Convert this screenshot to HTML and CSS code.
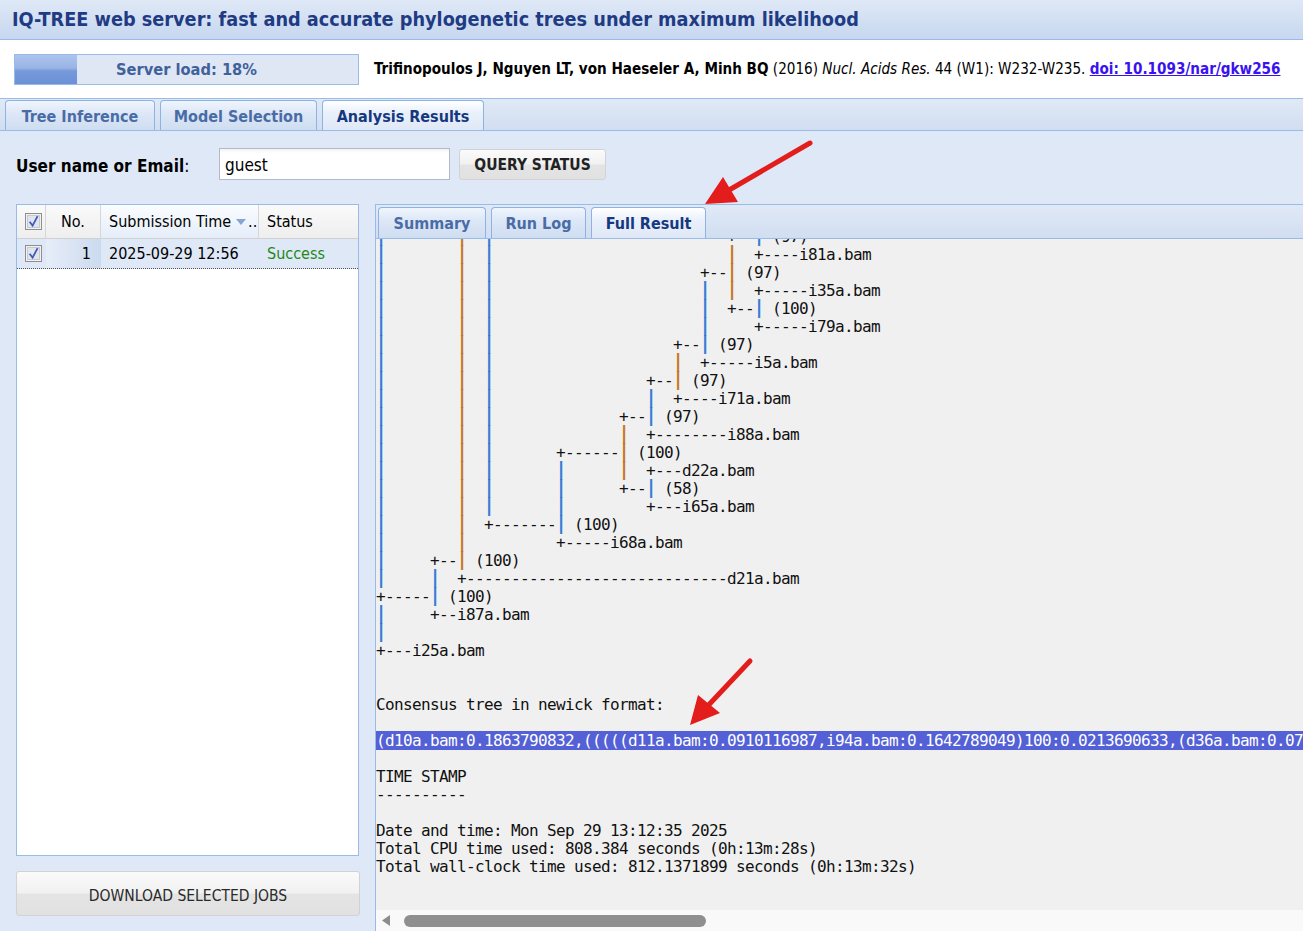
FILE: index.html
```html
<!DOCTYPE html>
<html lang="en">
<head>
<meta charset="utf-8">
<title>IQ-TREE web server</title>
<link rel="stylesheet" href="styles.css">
</head>
<body>
<div class="app">
  <header class="title-bar">
    <h1>IQ-TREE web server: fast and accurate phylogenetic trees under maximum likelihood</h1>
  </header>

  <div class="info-row">
    <div class="load-bar">
      <div class="load-fill" style="width:18%"></div>
      <span class="load-text">Server load: 18%</span>
    </div>
    <p class="cite"><b>Trifinopoulos J, Nguyen LT, von Haeseler A, Minh BQ</b> (2016) <i>Nucl. Acids Res.</i> 44 (W1): W232-W235. <a href="#">doi: 10.1093/nar/gkw256</a></p>
  </div>

  <nav class="main-tabs">
    <span class="tab tab-tree">Tree Inference</span>
    <span class="tab tab-model">Model Selection</span>
    <span class="tab tab-results active">Analysis Results</span>
  </nav>

  <main class="panel-body">
    <div class="query-row">
      <label class="query-label"><b>User name or Email</b>:</label>
      <div class="query-input">guest</div>
      <button class="btn btn-query">QUERY STATUS</button>
    </div>

    <div class="columns">
      <aside class="left-col">
        <div class="grid">
          <div class="grid-head">
            <div class="cell c-check"><svg class="cb" viewBox="0 0 17 17" width="17" height="17"><rect x="0.5" y="0.5" width="16" height="16" fill="#f2f2f2" stroke="#8e8e8e"/><rect x="2.5" y="2.5" width="12" height="12" fill="#e1e4ea" stroke="#c5c9d1"/><path d="M4.6 8.8 L7.6 12.6 L12.6 3.2" fill="none" stroke="#3d5bbd" stroke-width="1.8"/></svg></div>
            <div class="cell c-no">No.</div>
            <div class="cell c-time sorted">Submission Time<svg class="sort" viewBox="0 0 10 6" width="10" height="6"><path d="M0 0 H10 L5 6 Z" fill="#88a3d6"/></svg>..</div>
            <div class="cell c-status">Status</div>
          </div>
          <div class="grid-row">
            <div class="cell c-check"><svg class="cb" viewBox="0 0 17 17" width="17" height="17"><rect x="0.5" y="0.5" width="16" height="16" fill="#f2f2f2" stroke="#8e8e8e"/><rect x="2.5" y="2.5" width="12" height="12" fill="#e1e4ea" stroke="#c5c9d1"/><path d="M4.6 8.8 L7.6 12.6 L12.6 3.2" fill="none" stroke="#3d5bbd" stroke-width="1.8"/></svg></div>
            <div class="cell c-no num">1</div>
            <div class="cell c-time">2025-09-29 12:56</div>
            <div class="cell c-status ok">Success</div>
          </div>
        </div>
        <button class="btn btn-download">DOWNLOAD SELECTED JOBS</button>
      </aside>

      <section class="result">
        <div class="result-tabs">
          <span class="tab rtab-summary">Summary</span>
          <span class="tab rtab-log">Run Log</span>
          <span class="tab rtab-full active">Full Result</span>
        </div>
        <div class="result-content">
<pre class="tree"><span class="b">│</span>        <span class="o">│</span>  <span class="b">│</span>                          +--<span class="b">│</span> (97)
<span class="b">│</span>        <span class="o">│</span>  <span class="b">│</span>                          <span class="o">│</span>  +----i81a.bam
<span class="b">│</span>        <span class="o">│</span>  <span class="b">│</span>                       +--<span class="o">│</span> (97)
<span class="b">│</span>        <span class="o">│</span>  <span class="b">│</span>                       <span class="b">│</span>  <span class="o">│</span>  +-----i35a.bam
<span class="b">│</span>        <span class="o">│</span>  <span class="b">│</span>                       <span class="b">│</span>  +--<span class="b">│</span> (100)
<span class="b">│</span>        <span class="o">│</span>  <span class="b">│</span>                       <span class="b">│</span>     +-----i79a.bam
<span class="b">│</span>        <span class="o">│</span>  <span class="b">│</span>                    +--<span class="b">│</span> (97)
<span class="b">│</span>        <span class="o">│</span>  <span class="b">│</span>                    <span class="o">│</span>  +-----i5a.bam
<span class="b">│</span>        <span class="o">│</span>  <span class="b">│</span>                 +--<span class="o">│</span> (97)
<span class="b">│</span>        <span class="o">│</span>  <span class="b">│</span>                 <span class="b">│</span>  +----i71a.bam
<span class="b">│</span>        <span class="o">│</span>  <span class="b">│</span>              +--<span class="b">│</span> (97)
<span class="b">│</span>        <span class="o">│</span>  <span class="b">│</span>              <span class="o">│</span>  +--------i88a.bam
<span class="b">│</span>        <span class="o">│</span>  <span class="b">│</span>       +------<span class="o">│</span> (100)
<span class="b">│</span>        <span class="o">│</span>  <span class="b">│</span>       <span class="b">│</span>      <span class="o">│</span>  +---d22a.bam
<span class="b">│</span>        <span class="o">│</span>  <span class="b">│</span>       <span class="b">│</span>      +--<span class="b">│</span> (58)
<span class="b">│</span>        <span class="o">│</span>  <span class="b">│</span>       <span class="b">│</span>         +---i65a.bam
<span class="b">│</span>        <span class="o">│</span>  +-------<span class="b">│</span> (100)
<span class="b">│</span>        <span class="o">│</span>          +-----i68a.bam
<span class="b">│</span>     +--<span class="o">│</span> (100)
<span class="b">│</span>     <span class="b">│</span>  +-----------------------------d21a.bam
+-----<span class="b">│</span> (100)
<span class="b">│</span>     +--i87a.bam
<span class="b">│</span>
+---i25a.bam


Consensus tree in newick format:

<span class="sel">(d10a.bam:0.1863790832,(((((d11a.bam:0.0910116987,i94a.bam:0.1642789049)100:0.0213690633,(d36a.bam:0.0712468915,i42a.bam:0.0839120476)100:0.0125780391)</span>

TIME STAMP
----------

Date and time: Mon Sep 29 13:12:35 2025
Total CPU time used: 808.384 seconds (0h:13m:28s)
Total wall-clock time used: 812.1371899 seconds (0h:13m:32s)
</pre>
        </div>
        <div class="hscroll">
          <svg class="hs-arrow" viewBox="0 0 8 11" width="8" height="11"><path d="M8 0 V11 L0 5.5 Z" fill="#8c8c8c"/></svg>
          <div class="hs-thumb"></div>
        </div>
      </section>
    </div>
  </main>

  <svg class="arrows" viewBox="0 0 1303 931" width="1303" height="931">
    <line x1="810" y1="143" x2="724" y2="193" stroke="#e31c1c" stroke-width="5" stroke-linecap="round"/>
    <polygon points="705,204 723,177 738,202" fill="#e31c1c"/>
    <line x1="750" y1="661" x2="703" y2="711" stroke="#e31c1c" stroke-width="5" stroke-linecap="round"/>
    <polygon points="690,725 698,695 720,713" fill="#e31c1c"/>
  </svg>
</div>
</body>
</html>
```

FILE: styles.css
```css
* { box-sizing: border-box; }

html, body {
  margin: 0;
  padding: 0;
}

body {
  width: 1303px;
  height: 931px;
  overflow: hidden;
  font-family: "DejaVu Sans Condensed", "DejaVu Sans", sans-serif;
  background: #dfe8f6;
}

.app {
  position: relative;
  display: flex;
  flex-direction: column;
  height: 931px;
}

/* ---------- title ---------- */
.title-bar {
  flex: none;
  height: 40px;
  display: flex;
  align-items: center;
  padding-left: 12px;
  background: linear-gradient(#dfe8f6 0%, #d3e0f3 50%, #c6d7ef 100%);
  border-bottom: 1px solid #99bbe8;
}

.title-bar h1 {
  margin: 0;
  font-size: 19.7px;
  font-weight: bold;
  color: #1f3b83;
  white-space: nowrap;
}

/* ---------- info row ---------- */
.info-row {
  flex: none;
  height: 58px;
  display: flex;
  align-items: center;
  padding-left: 14px;
  gap: 15px;
  background: #fff;
}

.load-bar {
  width: 345px;
  height: 31px;
  border: 1px solid #99bbe8;
  background: #dfe7f5;
  display: grid;
}

.load-bar > * { grid-area: 1 / 1; }

.load-fill {
  background: linear-gradient(#adc4ec 0%, #98b4e6 45%, #7699da 55%, #6b91d6 100%);
}

.load-text {
  align-self: center;
  justify-self: center;
  font-weight: bold;
  font-size: 16.3px;
  color: #41619b;
}

.cite {
  margin: 0;
  font-size: 15.1px;
  color: #000;
  white-space: nowrap;
}

.cite a {
  color: #3a12f0;
  font-weight: bold;
  text-decoration: underline;
}

/* ---------- tabs ---------- */
.main-tabs {
  flex: none;
  height: 33px;
  display: flex;
  align-items: flex-end;
  gap: 5px;
  padding-left: 5px;
  background: linear-gradient(#e0e9f6, #d1def1);
  border-top: 1px solid #99bbe8;
  border-bottom: 1px solid #99bbe8;
}

.tab {
  height: 30px;
  display: flex;
  align-items: center;
  justify-content: center;
  padding-top: 2px;
  font-size: 16px;
  font-weight: bold;
  color: #4a6ca6;
  border: 1px solid #8db2e3;
  border-bottom: none;
  border-radius: 4px 4px 0 0;
  background: linear-gradient(#f0f5fc 0%, #dde8f7 40%, #cfddf1 100%);
}

.tab.active {
  color: #15387f;
  background: linear-gradient(#ffffff 0%, #eaf1fb 40%, #dfe8f6 100%);
}

.tab-tree { width: 150px; }
.tab-model { width: 157px; }
.tab-results { width: 162px; }

/* ---------- panel ---------- */
.panel-body {
  flex: 1;
  min-height: 0;
  display: flex;
  flex-direction: column;
  padding-left: 16px;
  background: #dfe8f6;
}

.query-row {
  flex: none;
  display: flex;
  align-items: center;
  height: 32px;
  margin-top: 17px;
}

.query-label {
  width: 203px;
  padding-top: 3px;
  font-size: 17px;
  color: #000;
}

.query-input {
  width: 231px;
  height: 32px;
  border: 1px solid #b5b8c8;
  background: linear-gradient(#f3f3f3 0px, #ffffff 4px);
  font-size: 17px;
  padding: 6px 5px 0;
  color: #000;
}

.btn {
  font-family: "DejaVu Sans Condensed", "DejaVu Sans", sans-serif;
  border: 1px solid #d2d2d2;
  border-radius: 3px;
  background: linear-gradient(#fbfbfb 0%, #f1f1f1 48%, #e4e4e4 52%, #e1e1e1 100%);
  color: #222;
  padding: 2px 0 0;
}

.btn-query {
  margin-left: 9px;
  width: 147px;
  height: 31px;
  font-size: 15.5px;
  font-weight: bold;
}

.columns {
  flex: 1;
  min-height: 0;
  display: flex;
  margin-top: 24px;
  gap: 16px;
}

/* ---------- left grid ---------- */
.left-col {
  flex: none;
  width: 343px;
  display: flex;
  flex-direction: column;
  padding-bottom: 15px;
}

.grid {
  height: 652px;
  border: 1px solid #99bbe8;
  background: #fff;
}

.grid-head,
.grid-row {
  display: flex;
}

.grid-head {
  height: 34px;
  background: linear-gradient(#fafafa, #eeeeee);
  border-bottom: 1px solid #d0d0d0;
}

.grid-row {
  height: 30px;
  background: #dfe8f6;
  border-bottom: 1px dotted #555;
}

.cell {
  display: flex;
  align-items: center;
  font-size: 16px;
  color: #000;
  white-space: nowrap;
  overflow: hidden;
}

.grid-head .cell { border-right: 1px solid #d6d6d6; }

.c-check { width: 29px; padding-left: 8px; }
.c-no { width: 55px; justify-content: center; }
.c-time { width: 158px; padding-left: 8px; }
.c-status { flex: 1; padding-left: 8px; }

.grid-head .c-status { border-right: none; }

.grid-head .sorted { background: linear-gradient(#fbfdff, #e4edf9); }

.sort { margin-left: 5px; margin-right: 2px; }

.grid-row .c-no {
  justify-content: flex-end;
  padding-right: 10px;
  background: linear-gradient(90deg, #e6edf8, #ccdaef);
}

.ok { color: #23881a; }

.btn-download {
  margin-top: 15px;
  height: 45px;
  width: 344px;
  padding-top: 4px;
  font-size: 15.5px;
  color: #2a2a2a;
}

/* ---------- right result ---------- */
.result {
  flex: none;
  width: 960px;
  display: flex;
  flex-direction: column;
  border-left: 1px solid #99bbe8;
}

.result-tabs {
  flex: none;
  height: 35px;
  display: flex;
  align-items: flex-end;
  gap: 5px;
  padding-left: 2px;
  background: linear-gradient(#e0e9f6, #d1def1);
  border-top: 1px solid #99bbe8;
  border-bottom: 1px solid #99bbe8;
}

.result-tabs .tab { height: 31px; padding-top: 0; }

.rtab-summary { width: 108px; }
.rtab-log { width: 95px; }
.rtab-full { width: 115px; }

.result-content {
  flex: 1;
  min-height: 0;
  overflow: hidden;
  background: #f0f0f0;
}

.tree {
  margin: -11px 0 0 0;
  font-family: "DejaVu Sans Mono", monospace;
  font-size: 16px;
  line-height: 18px;
  letter-spacing: -0.633px;
  white-space: pre;
  color: #111;
}

.tree .b { color: #2a7ad4; text-shadow: 0.8px 0 0 #2a7ad4; }
.tree .o { color: #c4741a; text-shadow: 0.8px 0 0 #c4741a; }

.tree .sel {
  background: #5460d5;
  color: #fff;
}

.hscroll {
  flex: none;
  height: 21px;
  display: flex;
  align-items: center;
  padding-left: 6px;
  background: #f9f9f9;
}

.hs-thumb {
  margin-left: 14px;
  width: 302px;
  height: 12px;
  border-radius: 6px;
  background: #8f8f8f;
}

/* ---------- annotation arrows ---------- */
.arrows {
  position: absolute;
  left: 0;
  top: 0;
  pointer-events: none;
}
```
